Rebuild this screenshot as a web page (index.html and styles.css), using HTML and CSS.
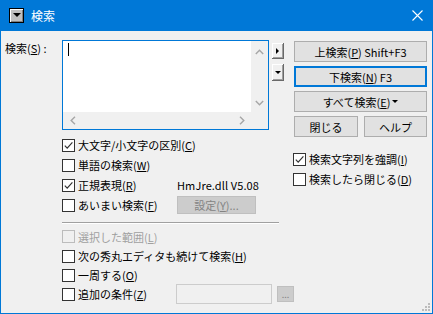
FILE: index.html
```html
<!DOCTYPE html>
<html lang="ja">
<head>
<meta charset="utf-8">
<title>検索</title>
<link rel="stylesheet" href="styles.css">
</head>
<body>
<div class="window">
  <div class="titlebar">
    <div class="sysicon"><span class="tri-down"></span></div>
    <span class="title">検索</span>
    <svg class="close" width="11" height="11" viewBox="0 0 11 11"><path d="M0.5 0.5 L10.5 10.5 M10.5 0.5 L0.5 10.5" stroke="#fff" stroke-width="1.1" fill="none"/></svg>
  </div>
  <div class="main">
    <div class="left">
      <div class="edit-row">
        <div class="label">検索(<u>S</u>) :</div>
        <div class="editor">
          <div class="edit-top">
            <div class="edit-text"><span class="caret"></span></div>
            <div class="vscroll">
              <svg width="9" height="6" viewBox="0 0 9 6"><path d="M0.8 5 L4.5 1.2 L8.2 5" stroke="#a6a6a6" stroke-width="1.4" fill="none"/></svg>
              <svg width="9" height="6" viewBox="0 0 9 6"><path d="M0.8 1 L4.5 4.8 L8.2 1" stroke="#a6a6a6" stroke-width="1.4" fill="none"/></svg>
            </div>
          </div>
          <div class="edit-bottom">
            <div class="hscroll">
              <svg width="6" height="9" viewBox="0 0 6 9"><path d="M5 0.8 L1.2 4.5 L5 8.2" stroke="#a6a6a6" stroke-width="1.4" fill="none"/></svg>
              <svg width="6" height="9" viewBox="0 0 6 9"><path d="M1 0.8 L4.8 4.5 L1 8.2" stroke="#a6a6a6" stroke-width="1.4" fill="none"/></svg>
            </div>
            <div class="corner"></div>
          </div>
        </div>
        <div class="minis">
          <div class="mini mini-a"><span class="tri-right"></span></div>
          <div class="mini mini-b"><span class="tri-down small"></span></div>
        </div>
      </div>

      <div class="opts1">
        <div class="row"><span class="cb checked"><svg width="11" height="11" viewBox="0 0 11 11"><path d="M1.8 5.6 L4.2 8.2 L9.4 2.4" stroke="#333" stroke-width="1.2" fill="none"/></svg></span><span>大文字/小文字の区別(<u>C</u>)</span></div>
        <div class="row"><span class="cb"></span><span>単語の検索(<u>W</u>)</span></div>
        <div class="row"><span class="cell"><span class="cb checked"><svg width="11" height="11" viewBox="0 0 11 11"><path d="M1.8 5.6 L4.2 8.2 L9.4 2.4" stroke="#333" stroke-width="1.2" fill="none"/></svg></span><span>正規表現(<u>R</u>)</span></span><span class="dll">HmJre.dll V5.08</span></div>
        <div class="row"><span class="cell"><span class="cb"></span><span>あいまい検索(<u>F</u>)</span></span><span class="btn-dis">設定(<u>Y</u>)...</span></div>
      </div>

      <div class="sep"></div>

      <div class="opts2">
        <div class="row r1 disabled"><span class="cb"></span><span>選択した範囲(<u>L</u>)</span></div>
        <div class="row r2"><span class="cb"></span><span>次の秀丸エディタも続けて検索(<u>H</u>)</span></div>
        <div class="row r3"><span class="cb"></span><span>一周する(<u>O</u>)</span></div>
        <div class="row r4"><span class="cell cell2"><span class="cb"></span><span>追加の条件(<u>Z</u>)</span></span><span class="field"></span><span class="dots-btn">...</span></div>
      </div>
    </div>

    <div class="right">
      <div class="btn">上検索(<u>P</u>) Shift+F3</div>
      <div class="btn default">下検索(<u>N</u>) F3</div>
      <div class="btn">すべて検索(<u>E</u>)<span class="tri-down tiny"></span></div>
      <div class="btn-pair">
        <div class="btn b-close">閉じる</div>
        <div class="btn b-help">ヘルプ</div>
      </div>
      <div class="opts-right">
        <div class="row"><span class="cb checked"><svg width="11" height="11" viewBox="0 0 11 11"><path d="M1.8 5.6 L4.2 8.2 L9.4 2.4" stroke="#333" stroke-width="1.2" fill="none"/></svg></span><span>検索文字列を強調(<u>I</u>)</span></div>
        <div class="row"><span class="cb"></span><span>検索したら閉じる(<u>D</u>)</span></div>
      </div>
    </div>
  </div>
  <div class="grip"></div>
</div>
</body>
</html>
```
FILE: styles.css
```css
html, body {
  margin: 0;
  padding: 0;
}
body {
  width: 433px;
  height: 314px;
  overflow: hidden;
  font-family: "Noto Sans CJK JP", "Noto Sans", sans-serif;
  font-size: 11px;
  color: #000;
  background: #f0f0f0;
}
u {
  text-decoration: underline;
  text-underline-offset: 1px;
}
.window {
  position: relative;
  box-sizing: border-box;
  width: 433px;
  height: 314px;
  border: 1px solid #0078d7;
  border-top: 0;
  background: #f0f0f0;
  display: flex;
  flex-direction: column;
}
.titlebar {
  height: 31px;
  flex: none;
  background: #0078d7;
  display: flex;
  align-items: center;
  padding-left: 8px;
  color: #fff;
}
.sysicon {
  width: 15px;
  height: 15px;
  box-sizing: border-box;
  border: 1px solid #000;
  background: #c0c0c0;
  box-shadow: inset 1px 1px #fff, inset -1px -1px #808080;
  display: flex;
  align-items: center;
  justify-content: center;
  margin-top: -1px;
}
.tri-down {
  width: 0;
  height: 0;
  border-left: 4px solid transparent;
  border-right: 4px solid transparent;
  border-top: 4px solid #000;
}
.tri-down.small {
  border-left-width: 3px;
  border-right-width: 3px;
  border-top-width: 3px;
}
.tri-down.tiny {
  border-left-width: 3px;
  border-right-width: 3px;
  border-top-width: 3px;
  margin-left: 2px;
}
.tri-right {
  width: 0;
  height: 0;
  border-top: 3px solid transparent;
  border-bottom: 3px solid transparent;
  border-left: 3px solid #000;
}
.title {
  margin-left: 7px;
  font-size: 12px;
  line-height: 16px;
}
.close {
  margin-left: auto;
  margin-right: 9px;
}
.main {
  display: flex;
  padding-top: 9px;
}
.left {
  width: 293px;
  flex: none;
}
.right {
  width: 133px;
  flex: none;
  padding-top: 1px;
}
.edit-row {
  display: flex;
  align-items: flex-start;
}
.label {
  width: 57px;
  padding-left: 4px;
  line-height: 16px;
}
.editor {
  width: 207px;
  height: 90px;
  box-sizing: border-box;
  border: 1px solid #0078d7;
  display: flex;
  flex-direction: column;
  background: #fff;
}
.edit-top {
  display: flex;
  height: 71px;
}
.edit-text {
  flex: 1;
  background: #fff;
  padding: 2px 0 0 5px;
}
.caret {
  display: block;
  width: 1px;
  height: 13px;
  background: #000;
}
.vscroll {
  width: 17px;
  background: #f0f0f0;
  display: flex;
  flex-direction: column;
  align-items: center;
  justify-content: space-between;
  padding: 8px 0 6px;
  box-sizing: border-box;
}
.edit-bottom {
  display: flex;
  height: 17px;
}
.hscroll {
  flex: 1;
  background: #f0f0f0;
  display: flex;
  align-items: center;
  justify-content: space-between;
  padding: 0 6px 0 7px;
}
.corner {
  width: 17px;
  background: #f0f0f0;
}
.minis {
  margin-left: 3px;
  padding-top: 3px;
  display: flex;
  flex-direction: column;
  gap: 5px;
}
.mini {
  width: 12px;
  height: 16px;
  box-sizing: border-box;
  background: #f0f0f0;
  border-right: 1px solid #696969;
  border-bottom: 1px solid #696969;
  box-shadow: inset 1px 1px #fff, inset -1px -1px #a0a0a0;
  display: flex;
  align-items: center;
  justify-content: center;
}
.mini-b {
  height: 17px;
}
.opts1 {
  margin-top: 5px;
  margin-left: 61px;
}
.row {
  display: flex;
  align-items: center;
  height: 20px;
  line-height: 16px;
  white-space: nowrap;
}
.cell {
  display: flex;
  align-items: center;
  width: 115px;
}
.cell2 {
  width: 114px;
}
.cb {
  width: 13px;
  height: 13px;
  box-sizing: border-box;
  border: 1px solid #333;
  background: #fff;
  margin-right: 3px;
  flex: none;
  display: flex;
  align-items: center;
  justify-content: center;
}
.cb svg {
  display: block;
}
.dll {
  letter-spacing: 0.1px;
}
.btn-dis {
  width: 79px;
  height: 18px;
  box-sizing: border-box;
  background: #cccccc;
  border: 1px solid #bfbfbf;
  color: #838383;
  display: flex;
  align-items: center;
  justify-content: center;
}
.sep {
  margin: 7px 0 0 61px;
  width: 217px;
  height: 1px;
  background: #a0a0a0;
  box-shadow: 0 1px #fff;
}
.opts2 {
  margin-top: 4px;
  margin-left: 61px;
}
.opts2 .r1 {
  height: 19px;
}
.opts2 .r3 {
  height: 18px;
}
.disabled {
  color: #a0a0a0;
}
.disabled .cb {
  border-color: #bcbcbc;
  background: #f0f0f0;
}
.field {
  width: 96px;
  height: 20px;
  box-sizing: border-box;
  border: 1px solid #cccccc;
  background: #f0f0f0;
}
.dots-btn {
  margin-left: 5px;
  width: 17px;
  height: 16px;
  box-sizing: border-box;
  background: #cccccc;
  border: 1px solid #bfbfbf;
  color: #838383;
  font-size: 9px;
  line-height: 16px;
  text-align: center;
  padding-top: 2px;
  display: flex;
  align-items: center;
  justify-content: center;
}
.btn {
  height: 21px;
  box-sizing: border-box;
  border: 1px solid #adadad;
  background: #e1e1e1;
  display: flex;
  align-items: center;
  justify-content: center;
  margin-bottom: 4px;
  white-space: nowrap;
}
.btn.default {
  border: 2px solid #0078d7;
}
.btn-pair {
  display: flex;
  gap: 6px;
}
.b-close {
  width: 64px;
}
.b-help {
  width: 63px;
}
.opts-right {
  margin-top: 8px;
  margin-left: -1px;
}
.grip {
  position: absolute;
  right: 2px;
  bottom: 2px;
  width: 8px;
  height: 8px;
  background:
    radial-gradient(circle, transparent 0, transparent 0) no-repeat;
}
.grip::before {
  content: "";
  position: absolute;
  left: 6px;
  top: 0;
  width: 2px;
  height: 2px;
  background: #bcbcbc;
  box-shadow: 0 3px #bcbcbc, -3px 3px #bcbcbc, 0 6px #bcbcbc, -3px 6px #bcbcbc, -6px 6px #bcbcbc;
}
```
